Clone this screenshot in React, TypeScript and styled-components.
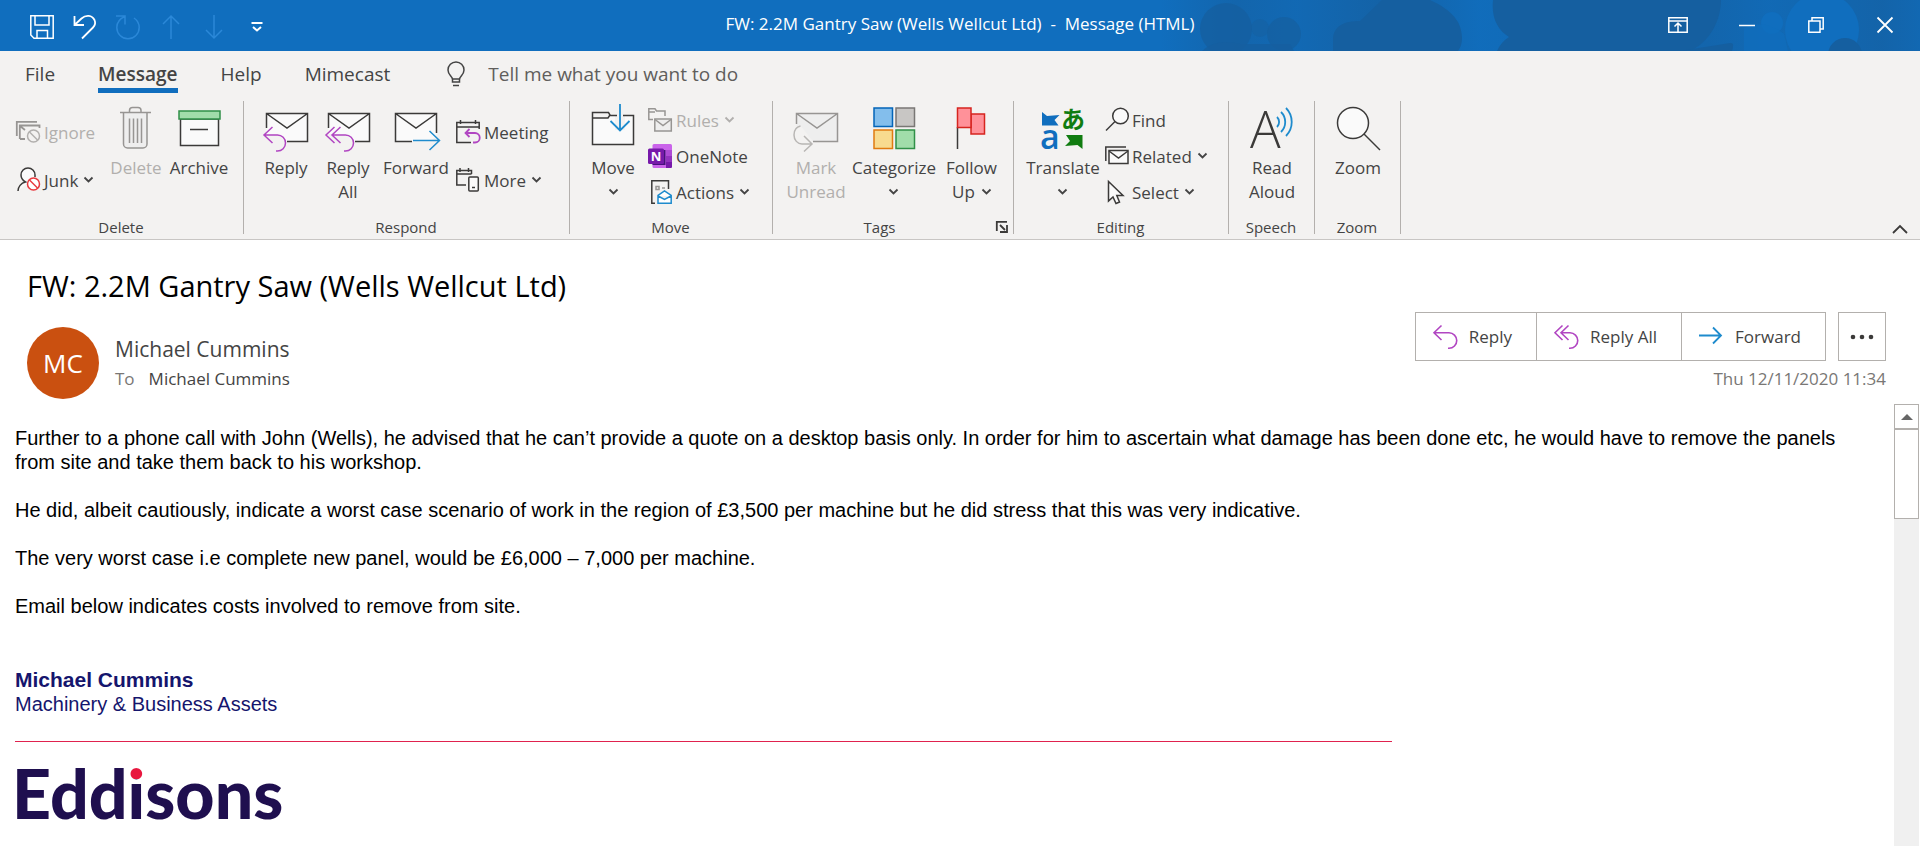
import React from "react";
import styled, { createGlobalStyle, css } from "styled-components";

const Global = createGlobalStyle`
  *, *::before, *::after { box-sizing: border-box; }
  html, body, #root { height: 100%; margin: 0; }
  body {
    overflow: hidden;
    background: #fff;
    color: #444;
    font-family: "Open Sans", "Noto Sans", sans-serif;
    font-size: 17px;
  }
  button, input { font: inherit; color: inherit; }
  button { margin: 0; padding: 0; border: 0; background: none; cursor: pointer; }
  button:disabled { cursor: default; }
  svg { display: block; flex: none; overflow: visible; }
`;

const Window = styled.div`
  display: flex;
  flex-direction: column;
  height: 100vh;
`;

/* ---------- title bar ---------- */

const TitleBar = styled.header`
  position: relative;
  flex: none;
  display: grid;
  grid-template-columns: 1fr auto 1fr;
  height: 51px;
  background: #106ebe;
  color: #fff;
  overflow: hidden;
`;

const Pattern = styled.svg`
  position: absolute;
  top: 0;
  right: 0;
`;

const QuickAccess = styled.div`
  display: flex;
  align-items: center;
  padding: 3px 0 0 20px;
`;

const QuickButton = styled.button`
  display: flex;
  justify-content: center;
  width: 43px;
  &:disabled { color: #2b88d8; }
`;

const WindowTitle = styled.div`
  position: relative;
  font-size: 17px;
  line-height: 48px;
  white-space: pre;
`;

const WindowControls = styled.div`
  position: relative;
  display: flex;
  justify-content: flex-end;
  padding-right: 1px;
`;

const WindowButton = styled.button`
  display: flex;
  align-items: center;
  justify-content: center;
  width: 69px;
  height: 50px;
`;

/* ---------- tabs ---------- */

const TabBar = styled.nav`
  flex: none;
  display: flex;
  align-items: flex-start;
  gap: 43px;
  height: 50px;
  padding: 8px 0 0 25px;
  background: #f3f2f1;
  font-size: 19px;
  line-height: 30px;
`;

const Tab = styled.button<{ $active?: boolean }>`
  height: 34px;
  border-bottom: 5px solid ${(p) => (p.$active ? "#106ebe" : "transparent")};
  font-weight: ${(p) => (p.$active ? 600 : 400)};
`;

const TellMe = styled.label`
  display: flex;
  gap: 23px;
  padding-left: 14px;
`;

const TellMeInput = styled.input`
  width: 300px;
  height: 30px;
  padding: 0;
  border: 0;
  outline: 0;
  background: none;
  &::placeholder { color: #605e5c; opacity: 1; }
`;

/* ---------- ribbon ---------- */

const Ribbon = styled.div`
  flex: none;
  display: flex;
  height: 139px;
  background: #f3f2f1;
  border-bottom: 1px solid #c8c6c4;
`;

const Group = styled.section`
  display: flex;
  flex-direction: column;
  height: 133px;
  padding: 0 11px 0 12px;
  border-right: 1px solid #b3b0ad;
`;

const GroupBody = styled.div`
  flex: 1;
  display: flex;
`;

const GroupLabel = styled.footer<{ $launcher?: boolean }>`
  position: relative;
  padding: 0 ${(p) => (p.$launcher ? 28 : 2)}px 1px 0;
  font-size: 15px;
  line-height: 12px;
  text-align: center;
`;

const Launcher = styled.button`
  position: absolute;
  right: -6px;
  top: 0;
`;

const disabledText = css`
  &:disabled { color: #b1afad; }
`;

const BigButton = styled.button<{ $width: number }>`
  display: flex;
  flex-direction: column;
  align-items: center;
  gap: 4px;
  width: ${(p) => p.$width}px;
  padding-top: 3px;
  line-height: 24px;
  white-space: nowrap;
  ${disabledText}
`;

const BigLabel = styled.span`
  display: flex;
  flex-direction: column;
  align-items: center;
`;

const LabelLine = styled.span`
  display: flex;
  align-items: center;
  gap: 7px;
  height: 24px;
`;

const SmallColumn = styled.div<{ $width: number; $roomy?: boolean }>`
  display: grid;
  grid-auto-rows: ${(p) => (p.$roomy ? 48 : 36)}px;
  align-content: start;
  width: ${(p) => p.$width}px;
  padding-top: ${(p) => (p.$roomy ? 7 : 1)}px;
`;

const SmallButton = styled.button`
  display: flex;
  align-items: center;
  gap: 4px;
  padding-left: 4px;
  white-space: nowrap;
  ${disabledText}
`;

const SmallLabel = styled.span`
  display: flex;
  align-items: center;
  gap: 6px;
`;

const Collapse = styled.button`
  align-self: flex-end;
  margin: 0 12px 5px auto;
`;

/* ---------- message header ---------- */

const MessageHeader = styled.header`
  flex: none;
  display: flex;
  justify-content: space-between;
  align-items: flex-end;
  padding: 26px 34px 0 27px;
`;

const Subject = styled.h1`
  margin: 0 0 21px;
  font-size: 29px;
  line-height: 40px;
  font-weight: 400;
  color: #000;
`;

const Sender = styled.div`
  display: flex;
  gap: 16px;
`;

const Avatar = styled.div`
  display: flex;
  align-items: center;
  justify-content: center;
  width: 72px;
  height: 72px;
  border-radius: 50%;
  background: #ca5010;
  color: #fff;
  font-size: 26px;
`;

const SenderName = styled.div`
  padding-top: 8px;
  font-size: 21px;
  line-height: 28px;
`;

const Recipients = styled.div`
  display: flex;
  gap: 14px;
  line-height: 32px;
`;

const Muted = styled.span`
  color: #797775;
`;

const HeaderSide = styled.div`
  display: flex;
  flex-direction: column;
  align-items: flex-end;
  padding-bottom: 2px;
`;

const Actions = styled.div`
  display: flex;
  gap: 12px;
`;

const ActionGroup = styled.div`
  display: flex;
  border: 1px solid #b3b0ad;
`;

const ActionButton = styled.button`
  display: flex;
  align-items: center;
  gap: 12px;
  height: 47px;
  padding: 0 24px 0 17px;
  & + & { border-left: 1px solid #b3b0ad; }
`;

const MoreButton = styled.button`
  display: flex;
  align-items: center;
  justify-content: center;
  width: 48px;
  border: 1px solid #b3b0ad;
`;

const SentTime = styled.time`
  color: #797775;
  line-height: 36px;
`;

/* ---------- message body ---------- */

const Reading = styled.main`
  flex: 1;
  display: flex;
  min-height: 0;
  padding: 5px 1px 0 15px;
`;

const Content = styled.article`
  flex: 1;
  min-width: 0;
  overflow: hidden;
  padding: 22px 36px 0 0;
  color: #000;
  font-family: "Liberation Sans", Arial, sans-serif;
  font-size: 20px;
  line-height: 24px;
`;

const Paragraph = styled.p`
  margin: 0 0 24px;
`;

const Signature = styled.address`
  margin-top: 49px;
  font-style: normal;
  line-height: 25px;
  color: #15156d;
`;

const SignatureName = styled.strong`
  display: block;
  font-size: 21px;
`;

const Rule = styled.hr`
  max-width: 1377px;
  margin: 24px 0 13px;
  border: 0;
  border-top: 1px solid #e0224e;
`;

const Logo = styled.div`
  margin-left: -3px;
  font-family: Lato, sans-serif;
  font-size: 68px;
  line-height: 76px;
  font-weight: 900;
  color: #1f0f4f;
`;

const LogoAccent = styled.span`
  background: linear-gradient(#e8173f 27px, #1f0f4f 27px);
  background-clip: text;
  -webkit-background-clip: text;
  color: transparent;
`;

const ScrollBar = styled.div`
  flex: none;
  display: flex;
  flex-direction: column;
  width: 25px;
  background: #f0f0f0;
`;

const ScrollUp = styled.button`
  display: flex;
  align-items: center;
  justify-content: center;
  height: 25px;
  border: 1px solid #b3b0ad;
  background: #fff;
`;

const ScrollThumb = styled.div`
  height: 90px;
  border: 1px solid #b3b0ad;
  background: #fff;
`;

/* ---------- icons ---------- */

const INK = "#3b3a39";
const GREY = "#979593";
const PURPLE = "#b146c2";
const BLUE = "#1e8bcd";

type IconProps = { size?: number; color?: string; children: React.ReactNode; w?: number; h?: number };

const Icon = ({ size = 24, w, h, color = INK, children }: IconProps) => (
  <svg
    width={w ?? size}
    height={h ?? size}
    viewBox={`0 0 ${w ?? size} ${h ?? size}`}
    fill="none"
    stroke={color}
    strokeWidth="1.5"
    aria-hidden="true"
  >
    {children}
  </svg>
);

const Big = (p: { color?: string; children: React.ReactNode }) => <Icon size={48} {...p} />;

const Chevron = () => (
  <Icon w={9} h={6} color="currentColor">
    <path d="M.5 .5 4.5 4.5 8.5 .5" strokeWidth="1.800" />
  </Icon>
);

const TrashIcon = () => (
  <Big color={GREY}>
    <path d="M11.5 9V40a4 4 0 0 0 4 4H31a4 4 0 0 0 4-4V9" fill="#eee" />
    <path d="M8 8.500H39M17.500 8V6.500a3 3 0 0 1 3-3H26a3 3 0 0 1 3 3V8M17.500 14.500V39M21.500 14.500V39M25.500 14.500V39M29.500 14.500V39" />
  </Big>
);

const ArchiveIcon = () => (
  <Big>
    <rect x="5.500" y="15" width="38" height="26.500" fill="#fafafa" />
    <rect x="4" y="7" width="41" height="8" fill="#a1ddaa" stroke="#309048" />
    <path d="M15 25.500H33" />
  </Big>
);

const ReplyMailIcon = () => (
  <Big>
    <path d="M4.500 9.500H45.500V37.500H24L15 30H4.500Z" fill="#fafafa" stroke="none" />
    <path d="M4.500 24V9.500H45.500V37.500H25M4.500 9.500 25 24 45.500 9.500" />
    <path d="M10.500 23 2 31 10.500 39M2 31H15.500a8 8 0 0 1 0 16H14" stroke={PURPLE} />
  </Big>
);

const ReplyAllMailIcon = () => (
  <Big>
    <path d="M4.500 9.500H45.500V37.500H30L20 30H4.500Z" fill="#fafafa" stroke="none" />
    <path d="M4.500 24V9.500H45.500V37.500H31M4.500 9.500 25 24 45.500 9.500" />
    <path d="M10.500 23 2 31 10.500 39M16.500 23 8 31 16.500 39M8 31H21.500a8 8 0 0 1 0 16H20" stroke={PURPLE} />
  </Big>
);

const ForwardMailIcon = () => (
  <Big>
    <path d="M3.500 9.500H44.500V32L38 37.500H3.500Z" fill="#fafafa" stroke="none" />
    <path d="M20 37.500H3.500V9.500H44.500V29M3.500 9.500 24 24 44.500 9.500" />
    <path d="M21 36.500H47M37.500 27 47.500 36.500 37.500 46" stroke={BLUE} />
  </Big>
);

const UnreadIcon = () => (
  <Big color={GREY}>
    <path d="M4.500 9.500H45.500V37.500H21L9 22H4.500Z" fill="#eee" stroke="none" />
    <path d="M4.500 20V9.500H45.500V37.500H21M4.500 9.500 25 24 45.500 9.500" />
    <path d="M8.500 22C4 23 2 27 2 31c0 5 3.500 9 8 9H20M12 32 20 40 12 47.500" stroke="#b8b6b4" />
  </Big>
);

const MoveIcon = () => (
  <Big>
    <path d="M26 11.500H20.500L19 14H3.500V40.500H44.500V11.500H36V26H26Z" fill="#fafafa" stroke="none" />
    <path d="M28 11.500H20.500M34 11.500H44.500V40.500H3.500V8.500H19.500L21 11 19 14H3.500" />
    <path d="M31 0V26M21.500 17 31 26.500 40.500 17" stroke={BLUE} strokeWidth="1.800" />
  </Big>
);

const CategorizeIcon = () => (
  <Big>
    <rect x="4" y="4" width="18.500" height="18.500" fill="#83beec" stroke="#0364b8" />
    <rect x="26" y="4" width="18.500" height="18.500" fill="#c8c6c4" stroke="#797775" />
    <rect x="4" y="26" width="18.500" height="18.500" fill="#f8db8f" stroke="#e07b10" />
    <rect x="26" y="26" width="18.500" height="18.500" fill="#a1ddaa" stroke="#309048" />
  </Big>
);

const FlagIcon = () => (
  <Big>
    <path d="M9.500 23V45" />
    <g fill="#ff9199" stroke="#d6251f">
      <rect x="23" y="10" width="13.500" height="20" />
      <rect x="9.500" y="4" width="13.500" height="19.500" />
    </g>
  </Big>
);

const TranslateIcon = () => (
  <Big>
    <path d="M3 8 8 12 20.500 11 15.500 16 19.500 21.500H3Z" fill="#106ebe" stroke="none" />
    <path d="M43.500 45 38.500 41 26 42 31 37 27 31H43.500Z" fill="#107c10" stroke="none" />
    <text x="1" y="45" fill="#106ebe" stroke="none" fontFamily="Open Sans, sans-serif" fontSize="34" fontWeight="600">a</text>
    <text x="22" y="24" fill="#107c10" stroke="none" fontFamily="Noto Sans CJK JP, sans-serif" fontSize="24" fontWeight="700">あ</text>
  </Big>
);

const ReadAloudIcon = () => (
  <Big>
    <text x="2" y="44" fill={INK} stroke="none" fontFamily="Open Sans, sans-serif" fontSize="51" fontWeight="300">A</text>
    <path d="M29 13a7 7 0 0 1 0 10M33 8a14 14 0 0 1 0 20M38 4a20 20 0 0 1 0 28" stroke={BLUE} strokeWidth="1.800" />
  </Big>
);

const ZoomIcon = () => (
  <Big>
    <circle cx="19" cy="19" r="15.500" fill="#fafafa" />
    <path d="M30 30 46 46" />
  </Big>
);

const Ban = ({ color, fill }: { color: string; fill: string }) => (
  <g stroke={color}>
    <circle cx="17.500" cy="16" r="6" fill={fill} />
    <path d="M13.500 12 21.500 20" />
  </g>
);

const IgnoreIcon = () => (
  <Icon color={GREY}>
    <path d="M.8 16V1.800H21M3.800 19V5.500H23.500V8M4 19H9M4 6 9 10" strokeWidth="1.800" />
    <Ban color="#b1afad" fill="#f3f2f1" />
  </Icon>
);

const JunkIcon = () => (
  <Icon>
    <path d="M2 23c0-4 3-8 7.500-9C6 12 5 10 5 7a7 7 0 0 1 14 0v2" fill="#fafafa" />
    <Ban color="#e8383d" fill="#fff" />
  </Icon>
);

const MeetingIcon = () => (
  <Icon>
    <path d="M15 22.500H.8V2.500H23.200V9M.8 7H23.200M4.500 0V4M19.500 0V4" />
    <path d="M13.500 9 9.500 13 13.500 17M10 13H19a4 4 0 0 1 0 9.500H17" stroke={PURPLE} strokeWidth="1.800" />
  </Icon>
);

const MoreIcon = () => (
  <Icon>
    <path d="M10 17H.8V2.500H15.500V6M.8 6H15.500M4 0V4M12.500 0V4" />
    <rect x="12.800" y="9" width="9.500" height="14" rx="1" fill="#fafafa" />
    <path d="M16 19.500H19" />
  </Icon>
);

const RulesIcon = () => (
  <Icon color={GREY}>
    <path d="M5 11.500H.8V.8H7L8.500 3H17V8M.8 4H7" />
    <rect x="6.800" y="11" width="16.500" height="12" fill="#eee" />
    <path d="M7 11.500 15 17.500 23 11.500" />
  </Icon>
);

const OneNoteIcon = () => (
  <Icon>
    <g stroke="none">
      <rect x="4.500" width="19.500" height="24" rx="1.500" fill="#ca64ea" />
      <path d="M18 6H24V12H18Z" fill="#ae4bd5" />
      <path d="M18 12H24V18H18Z" fill="#9332bf" />
      <path d="M18 18H24V22.500a1.500 1.500 0 0 1-1.500 1.500H18Z" fill="#7719aa" />
      <rect x="4.500" y="6" width="13" height="15" fill="#45127a" />
      <rect y="4.500" width="16" height="15.500" rx="1.500" fill="#7719aa" />
      <text x="8" y="16.500" fill="#fff" textAnchor="middle" fontFamily="Open Sans, sans-serif" fontSize="13" fontWeight="700">N</text>
    </g>
  </Icon>
);

const ActionsIcon = () => (
  <Icon>
    <path d="M7 23.200H3.800V.8H20.500V9" fill="none" />
    <path d="M8 6.500H11V9.500H8ZM14 8H17" stroke={GREY} />
    <path d="M10 23.200V15.500L16.500 11 23.200 15.500V23.200ZM10 16 16.500 19.500 23 16" fill="#fff" stroke={BLUE} />
  </Icon>
);

const FindIcon = () => (
  <Icon>
    <circle cx="16.500" cy="8" r="7.800" fill="#fafafa" />
    <path d="M11 13.500 2 22.500" />
  </Icon>
);

const RelatedIcon = () => (
  <Icon>
    <path d="M1.800 17V3H22" />
    <rect x="5" y="6.500" width="19" height="13" fill="#fafafa" />
    <path d="M5 7 14.500 14 24 7" />
  </Icon>
);

const SelectIcon = () => (
  <Icon>
    <path d="M4.500 1.500V21L9 17 12 23.500 15.500 22 12.800 15.500H19Z" fill="#fafafa" />
  </Icon>
);

const ReplyIcon = () => (
  <Icon color={PURPLE}>
    <path d="M8.500 .5 1 7.800 8.500 15M1 7.800H16a7.500 7.500 0 0 1 0 15.500H15" strokeWidth="1.600" />
  </Icon>
);

const ReplyAllIcon = () => (
  <Icon color={PURPLE}>
    <path d="M8.500 .5 1 7.800 8.500 15M14.500 .5 7 7.800 14.500 15M7 7.800H16a7.500 7.500 0 0 1 0 15.500H15" strokeWidth="1.600" />
  </Icon>
);

const ForwardIcon = () => (
  <Icon color={BLUE}>
    <path d="M0 10.500H22M14 2.500 22 10.500 14 18.500" strokeWidth="1.800" />
  </Icon>
);

/* ---------- page ---------- */

const TitlePattern = () => (
  <Pattern width="760" height="51" viewBox="0 0 760 51" aria-hidden="true">
    <defs>
      <linearGradient id="haze">
        <stop offset="0" stopColor="#155fa0" stopOpacity="0" />
        <stop offset=".1" stopColor="#155fa0" stopOpacity=".6" />
        <stop offset=".18" stopColor="#155fa0" stopOpacity=".35" />
        <stop offset=".3" stopColor="#155fa0" stopOpacity=".8" />
        <stop offset=".42" stopColor="#155fa0" stopOpacity=".1" />
        <stop offset=".72" stopColor="#155fa0" stopOpacity=".6" />
        <stop offset=".8" stopColor="#155fa0" stopOpacity=".3" />
        <stop offset=".95" stopColor="#155fa0" stopOpacity=".7" />
        <stop offset="1" stopColor="#155fa0" stopOpacity=".4" />
      </linearGradient>
    </defs>
    <rect width="760" height="51" fill="url(#haze)" />
    <g fill="#155fa0">
      <circle cx="66" cy="29" r="26" opacity=".8" />
      <circle cx="100" cy="28" r="9" opacity=".5" />
      <circle cx="124" cy="34" r="17" opacity=".7" />
      <path d="M42 51Q56 38 80 44H130L134 51Z" opacity=".8" />
      <path d="M173 51V40C173 26 184 21 200 21L222 0H270C292 10 302 22 302 38Q302 46 298 51Z" />
      <path d="M333 0C331 18 338 30 349 37Q341 42 337 51H530C550 42 561 20 561 0Z" />
      <path d="M520 51 570 43Q575 42 572 51Z" />
    </g>
    <circle cx="612" cy="23" r="11" fill="#106ebe" />
    <path d="M584 51V28Q604 18 624 34L628 51Z" fill="#106ebe" opacity=".7" />
    <circle cx="662" cy="30" r="37" fill="#106ebe" />
    <circle cx="685" cy="55" r="17" fill="#155fa0" />
  </Pattern>
);

type BigProps = {
  width: number;
  icon: React.ReactNode;
  lines: string[];
  menu?: boolean;
  disabled?: boolean;
};

const BigCommand = ({ width, icon, lines, menu, disabled }: BigProps) => (
  <BigButton $width={width} disabled={disabled}>
    {icon}
    <BigLabel>
      {lines.map((line, i) => (
        <LabelLine key={line}>
          {line}
          {menu && i === 1 && <Chevron />}
        </LabelLine>
      ))}
      {menu && lines.length === 1 && (
        <LabelLine>
          <Chevron />
        </LabelLine>
      )}
    </BigLabel>
  </BigButton>
);

type SmallProps = { icon: React.ReactNode; label: string; menu?: boolean; disabled?: boolean };

const SmallCommand = ({ icon, label, menu, disabled }: SmallProps) => (
  <SmallButton disabled={disabled}>
    {icon}
    <SmallLabel>
      {label}
      {menu && <Chevron />}
    </SmallLabel>
  </SmallButton>
);

export default function App() {
  return (
    <Window>
      <Global />
      <TitleBar>
        <TitlePattern />
        <QuickAccess>
          <QuickButton aria-label="Save">
            <Icon color="#fff">
              <path d="M.8 .8H23.200V23.200H4L.8 20ZM5 1V10H19V1M7 23V15.500H17.500V23" />
            </Icon>
          </QuickButton>
          <QuickButton aria-label="Undo">
            <Icon color="#fff">
              <path d="M1.500 1V10H11M1.500 10 8.500 3.500C13-.5 19 0 21.500 5c1.500 3.500 0 6-1.500 7.500L9 23.500" strokeWidth="1.800" />
            </Icon>
          </QuickButton>
          <QuickButton aria-label="Redo" disabled>
            <Icon color="currentColor">
              <path d="M0 1H9V9.500M9 1.500C3 4 .8 8 .8 12.500a11.200 11.200 0 0 0 22.400 0C23.200 8.500 21.500 5.500 18 3" />
            </Icon>
          </QuickButton>
          <QuickButton aria-label="Previous item" disabled>
            <Icon color="currentColor">
              <path d="M12 24V1M4 9 12 1 20 9" />
            </Icon>
          </QuickButton>
          <QuickButton aria-label="Next item" disabled>
            <Icon color="currentColor">
              <path d="M12 0V23M4 15 12 23 20 15" />
            </Icon>
          </QuickButton>
          <QuickButton aria-label="Customize quick access toolbar">
            <Icon w={12} h={12} color="#fff">
              <path d="M.5 2H11.500M2 6 6 9.500 10 6" strokeWidth="2" />
            </Icon>
          </QuickButton>
        </QuickAccess>
        <WindowTitle>{"FW: 2.2M Gantry Saw (Wells Wellcut Ltd)  -  Message (HTML)"}</WindowTitle>
        <WindowControls>
          <WindowButton aria-label="Ribbon display options">
            <Icon w={20} h={16} color="#fff">
              <path d="M.8 .8H19.200V15.200H.8ZM1 4H19M10 15V6.500M6.500 9.500 10 6 13.500 9.500" />
            </Icon>
          </WindowButton>
          <WindowButton aria-label="Minimize">
            <Icon size={16} color="#fff">
              <path d="M0 8.500H16" />
            </Icon>
          </WindowButton>
          <WindowButton aria-label="Restore">
            <Icon size={16} color="#fff">
              <path d="M.8 4H12V15.200H.8ZM4 4V.8H15.200V12H12" />
            </Icon>
          </WindowButton>
          <WindowButton aria-label="Close">
            <Icon size={16} color="#fff">
              <path d="M.5 .5 15.500 15.500M15.500 .5 .5 15.500" strokeWidth="1.800" />
            </Icon>
          </WindowButton>
        </WindowControls>
      </TitleBar>

      <TabBar>
        <Tab>File</Tab>
        <Tab $active>Message</Tab>
        <Tab>Help</Tab>
        <Tab>Mimecast</Tab>
        <TellMe>
          <Icon w={18} h={29} color="#444">
            <path d="M5.500 23V20.500C5.500 17 1 16 1 11a8 8 0 0 1 16 0c0 5-4.500 6-4.500 9.500V23ZM5.500 20H12.500M6 26.500H12" />
          </Icon>
          <TellMeInput aria-label="Tell me what you want to do" placeholder="Tell me what you want to do" />
        </TellMe>
      </TabBar>

      <Ribbon>
        <Group>
          <GroupBody>
            <SmallColumn $width={94} $roomy>
              <SmallCommand icon={<IgnoreIcon />} label="Ignore" disabled />
              <SmallCommand icon={<JunkIcon />} label="Junk" menu />
            </SmallColumn>
            <BigCommand width={60} icon={<TrashIcon />} lines={["Delete"]} disabled />
            <BigCommand width={66} icon={<ArchiveIcon />} lines={["Archive"]} />
          </GroupBody>
          <GroupLabel>Delete</GroupLabel>
        </Group>
        <Group>
          <GroupBody>
            <BigCommand width={60} icon={<ReplyMailIcon />} lines={["Reply"]} />
            <BigCommand width={64} icon={<ReplyAllMailIcon />} lines={["Reply", "All"]} />
            <BigCommand width={72} icon={<ForwardMailIcon />} lines={["Forward"]} />
            <SmallColumn $width={106} $roomy>
              <SmallCommand icon={<MeetingIcon />} label="Meeting" />
              <SmallCommand icon={<MoreIcon />} label="More" menu />
            </SmallColumn>
          </GroupBody>
          <GroupLabel>Respond</GroupLabel>
        </Group>
        <Group>
          <GroupBody>
            <BigCommand width={62} icon={<MoveIcon />} lines={["Move"]} menu />
            <SmallColumn $width={117}>
              <SmallCommand icon={<RulesIcon />} label="Rules" menu disabled />
              <SmallCommand icon={<OneNoteIcon />} label="OneNote" />
              <SmallCommand icon={<ActionsIcon />} label="Actions" menu />
            </SmallColumn>
          </GroupBody>
          <GroupLabel>Move</GroupLabel>
        </Group>
        <Group>
          <GroupBody>
            <BigCommand width={62} icon={<UnreadIcon />} lines={["Mark", "Unread"]} disabled />
            <BigCommand width={94} icon={<CategorizeIcon />} lines={["Categorize"]} menu />
            <BigCommand width={61} icon={<FlagIcon />} lines={["Follow", "Up"]} menu />
          </GroupBody>
          <GroupLabel $launcher>
            Tags
            <Launcher aria-label="Tags options">
              <Icon size={12}>
                <path d="M.8 10V.8H11M4 4 9 9M11 4V11H4" strokeWidth="1.800" />
              </Icon>
            </Launcher>
          </GroupLabel>
        </Group>
        <Group>
          <GroupBody>
            <BigCommand width={74} icon={<TranslateIcon />} lines={["Translate"]} menu />
            <SmallColumn $width={117}>
              <SmallCommand icon={<FindIcon />} label="Find" />
              <SmallCommand icon={<RelatedIcon />} label="Related" menu />
              <SmallCommand icon={<SelectIcon />} label="Select" menu />
            </SmallColumn>
          </GroupBody>
          <GroupLabel>Editing</GroupLabel>
        </Group>
        <Group>
          <GroupBody>
            <BigCommand width={62} icon={<ReadAloudIcon />} lines={["Read", "Aloud"]} />
          </GroupBody>
          <GroupLabel>Speech</GroupLabel>
        </Group>
        <Group>
          <GroupBody>
            <BigCommand width={62} icon={<ZoomIcon />} lines={["Zoom"]} />
          </GroupBody>
          <GroupLabel>Zoom</GroupLabel>
        </Group>
        <Collapse aria-label="Collapse the ribbon">
          <Icon w={16} h={9}>
            <path d="M1 8 8 1 15 8" strokeWidth="1.800" />
          </Icon>
        </Collapse>
      </Ribbon>

      <MessageHeader>
        <div>
          <Subject>FW: 2.2M Gantry Saw (Wells Wellcut Ltd)</Subject>
          <Sender>
            <Avatar>MC</Avatar>
            <div>
              <SenderName>Michael Cummins</SenderName>
              <Recipients>
                <Muted>To</Muted>
                <span>Michael Cummins</span>
              </Recipients>
            </div>
          </Sender>
        </div>
        <HeaderSide>
          <Actions>
            <ActionGroup>
              <ActionButton>
                <ReplyIcon />
                Reply
              </ActionButton>
              <ActionButton>
                <ReplyAllIcon />
                Reply All
              </ActionButton>
              <ActionButton>
                <ForwardIcon />
                Forward
              </ActionButton>
            </ActionGroup>
            <MoreButton aria-label="More actions">
              <Icon w={24} h={6}>
                <g fill={INK} stroke="none">
                  <circle cx="3" cy="3" r="2.300" />
                  <circle cx="12" cy="3" r="2.300" />
                  <circle cx="21" cy="3" r="2.300" />
                </g>
              </Icon>
            </MoreButton>
          </Actions>
          <SentTime dateTime="2020-11-12T11:34">Thu 12/11/2020 11:34</SentTime>
        </HeaderSide>
      </MessageHeader>

      <Reading>
        <Content>
          <Paragraph>
            Further to a phone call with John (Wells), he advised that he can’t provide a quote on a desktop basis only.
            In order for him to ascertain what damage has been done etc, he would have to remove the panels from site and
            take them back to his workshop.
          </Paragraph>
          <Paragraph>
            He did, albeit cautiously, indicate a worst case scenario of work in the region of £3,500 per machine but he
            did stress that this was very indicative.
          </Paragraph>
          <Paragraph>The very worst case i.e complete new panel, would be £6,000 – 7,000 per machine.</Paragraph>
          <Paragraph>Email below indicates costs involved to remove from site.</Paragraph>
          <Signature>
            <SignatureName>Michael Cummins</SignatureName>
            Machinery &amp; Business Assets
          </Signature>
          <Rule />
          <Logo>
            Edd<LogoAccent>i</LogoAccent>sons
          </Logo>
        </Content>
        <ScrollBar>
          <ScrollUp aria-label="Scroll up">
            <Icon w={12} h={6}>
              <path d="M0 6 6 0 12 6Z" fill="#666" stroke="none" />
            </Icon>
          </ScrollUp>
          <ScrollThumb />
        </ScrollBar>
      </Reading>
    </Window>
  );
}
